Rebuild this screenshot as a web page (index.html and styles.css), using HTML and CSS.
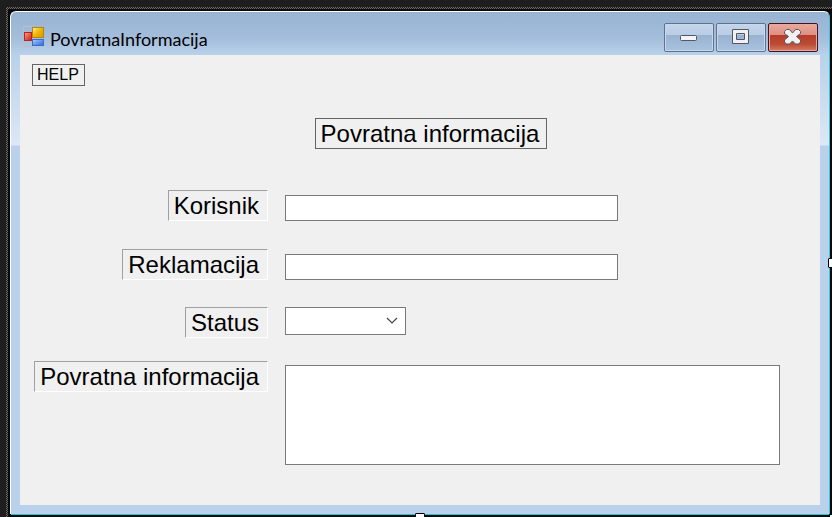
FILE: index.html
```html
<!DOCTYPE html>
<html lang="hr">
<head>
<meta charset="utf-8">
<title>PovratnaInformacija</title>
<link rel="stylesheet" href="styles.css">
</head>
<body>
<div class="surface">
  <main class="window">
    <header class="titlebar">
      <svg class="app-icon" width="22" height="22" viewBox="0 0 22 22" aria-hidden="true">
        <defs>
          <linearGradient id="gold" x1="0" y1="0" x2="1" y2="1"><stop offset="0" stop-color="#ffef9c"/><stop offset=".5" stop-color="#f0b400"/><stop offset="1" stop-color="#d89500"/></linearGradient>
          <linearGradient id="red" x1="0" y1="0" x2="1" y2="1"><stop offset="0" stop-color="#f6a294"/><stop offset="1" stop-color="#c41a10"/></linearGradient>
          <linearGradient id="blue" x1="0" y1="0" x2="1" y2="1"><stop offset="0" stop-color="#a9cbff"/><stop offset="1" stop-color="#2866dc"/></linearGradient>
        </defs>
        <path d="M.5 6V.5H9M.5 15V20.500H9" fill="none" stroke="#bdbec4"/>
        <rect x="1.500" y="6.500" width="7" height="8" fill="url(#red)" stroke="#c32116"/>
        <rect x="9.500" y="1.500" width="11" height="10" fill="url(#gold)" stroke="#b98508"/>
        <rect x="9.500" y="13.500" width="11" height="6" fill="url(#blue)" stroke="#3a6cc8"/>
      </svg>
      <h1 class="caption">PovratnaInformacija</h1>
      <div class="controls">
        <button class="control" type="button" aria-label="Minimize">
          <svg width="20" height="20" viewBox="0 0 20 20"><rect x="1.500" y="8.500" width="16" height="5" rx="1" fill="#f4f4f4" stroke="#535666"/></svg>
        </button>
        <button class="control" type="button" aria-label="Maximize">
          <svg width="20" height="20" viewBox="0 0 20 20"><path d="M1.500 2.500h16v14h-16zM5.500 6.500v6h8v-6z" fill="#f1f1f1" fill-rule="evenodd" stroke="#535666"/></svg>
        </button>
        <button class="control close" type="button" aria-label="Close">
          <svg width="20" height="20" viewBox="0 0 20 20"><path d="M3.500 2.500h3l3 3.500 3-3.500h3l2 2v2l-4 3 4 3.500v2l-2 2h-3l-3-3-3 3h-3l-2-2v-2l4-3.500-4-3v-2z" fill="#f1f1f1" stroke="#535666"/></svg>
        </button>
      </div>
    </header>
    <form class="client">
      <button class="help" type="button">HELP</button>
      <div class="heading-row"><h2 class="heading">Povratna informacija</h2></div>
      <div class="fields">
        <label class="label" for="korisnik">Korisnik</label>
        <input class="field text" id="korisnik" type="text">
        <label class="label" for="reklamacija">Reklamacija</label>
        <input class="field text" id="reklamacija" type="text">
        <label class="label" for="status">Status</label>
        <select class="field status" id="status"><option></option></select>
        <label class="label" for="informacija">Povratna informacija</label>
        <textarea class="field message" id="informacija"></textarea>
      </div>
    </form>
    <span class="handle handle-right"></span>
    <span class="handle handle-bottom"></span>
    <span class="handle handle-corner"></span>
  </main>
</div>
</body>
</html>
```
FILE: styles.css
```css
* {
  box-sizing: border-box;
}

body {
  margin: 0;
  background: #1e1e1e;
  color: #000;
  font-family: "Liberation Sans", Arial, sans-serif;
  overflow: hidden;
}

.surface {
  display: flex;
  min-height: 100vh;
  padding: 7px 0 0 6px;
}

/* Dotted selection band round the window */
.window {
  position: relative;
  display: flex;
  flex: 1;
  flex-direction: column;
  padding: 4px 2px 2px 4px;
  background:
    linear-gradient(#0a0a0a, #0a0a0a) 2px 2px / 100% 100% no-repeat,
    repeating-conic-gradient(#6c6c6c 0 25%, #1e1e1e 0 50%) 0 0 / 2px 2px;
}

.titlebar {
  display: flex;
  align-items: center;
  height: 44px;
  padding: 7px 11px 0 12px;
  border: solid #fff;
  border-width: 1px 0 0 1px;
  border-right: 1px solid #35c8e0;
  border-radius: 6px 6px 0 0;
  background: linear-gradient(#98b4d2, #a3bddb 60%, #b9d1ea);
}

.app-icon {
  flex: none;
}

.caption {
  flex: 1;
  margin: 0 0 0 5px;
  padding-top: 4px;
  font: 18px/24px Lato, "Open Sans", sans-serif;
}

.controls {
  display: flex;
  gap: 2px;
}

.control {
  display: flex;
  align-items: center;
  justify-content: center;
  width: 50px;
  height: 29px;
  padding: 0;
  border: 1px solid #61728d;
  border-radius: 2px;
  background: linear-gradient(#c3d5ea, #b9cde5 40%, #98b2d0 41%, #a9c2df);
  box-shadow: inset 0 0 0 1px #c8d9ec;
}

.close {
  border-color: #48111f;
  background: linear-gradient(#e9a99d, #de8f82 40%, #b53d29 41%, #bd4b34 75%, #d28068);
  box-shadow: inset 0 0 0 1px #e5a99d;
}

.client {
  flex: 1;
  margin: 0 1px 1px;
  padding: 9px 40px 40px 12px;
  border: solid #b9d1ea;
  border-width: 0 9px 9px;
  border-image: linear-gradient(#b9d1ea, #dce8f5 90px, #b9d1ea 91px) 0 9 9 9;
  background: #f0f0f0;
  background-clip: padding-box;
  box-shadow: -1px 0 #fff, 1px 0 #35c8e0, 0 1px #20c6dc;
}

.help {
  display: block;
  height: 22px;
  padding: 0 5px 0 4px;
  border: 1px solid #646464;
  background: none;
  color: #000;
  font: 16px/20px "Liberation Sans", Arial, sans-serif;
}

.heading-row {
  display: flex;
  justify-content: center;
  margin: 32px 0 41px;
  padding-left: 50px;
}

.heading {
  margin: 0;
  padding: 0 7px 0 5px;
  border: 1px solid #646464;
  font-size: 24px;
  font-weight: 400;
  line-height: 29px;
}

.fields {
  display: grid;
  grid-template-columns: 236px minmax(0, 1fr);
  grid-template-rows: 59px 58px 54px auto;
  align-items: start;
  column-gap: 17px;
}

.label {
  justify-self: end;
  padding: 0 8px 0 5px;
  border: 1px solid;
  border-color: #a0a0a0 #fff #fff #a0a0a0;
  font-size: 24px;
  line-height: 29px;
  white-space: nowrap;
}

.field {
  width: 100%;
  margin: 0;
  padding: 2px 4px;
  border: 1px solid #7a7a7a;
  border-radius: 0;
  background: #fff;
  font: 18px/20px "Liberation Sans", Arial, sans-serif;
}

.text {
  max-width: 333px;
  height: 26px;
  margin-top: 5px;
}

.status {
  max-width: 121px;
  height: 28px;
  appearance: none;
  background: #fff url("data:image/svg+xml,%3Csvg xmlns='http://www.w3.org/2000/svg' width='12' height='8'%3E%3Cpath d='M1 1l5 5 5-5' fill='none' stroke='%23444' stroke-width='1.200'/%3E%3C/svg%3E") right 7px center no-repeat;
}

.message {
  display: block;
  height: 100px;
  margin-top: 4px;
  resize: none;
}

.handle {
  position: absolute;
  width: 10px;
  height: 10px;
  border: 1px solid #000;
  border-radius: 1px;
  background: #fff;
}

.handle-right {
  top: 50%;
  right: -6px;
  margin-top: -4px;
}

.handle-bottom {
  bottom: -6px;
  left: 50%;
  margin-left: -4px;
}

.handle-corner {
  right: -7px;
  bottom: -7px;
}
```
